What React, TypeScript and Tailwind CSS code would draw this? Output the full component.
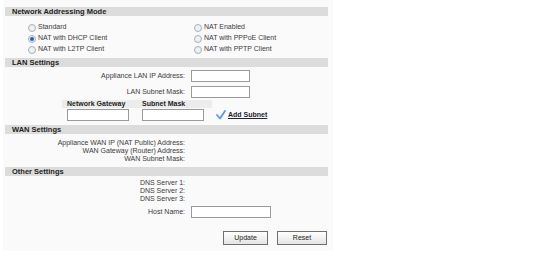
import type { ReactNode } from "react";

const font = { fontFamily: '"Liberation Sans", Arial, sans-serif' };

function Radio({ checked = false, label }: { checked?: boolean; label: string }) {
  return (
    <div className="flex items-center gap-[2px] h-[11px]">
      <span className="w-[8px] h-[8px] rounded-full border border-[#a9b0b8] bg-[#eef0f2] flex items-center justify-center">
        {checked && <span className="w-[4px] h-[4px] rounded-full bg-[#1f5fb8]" />}
      </span>
      <span>{label}</span>
    </div>
  );
}

function Header({ children }: { children: ReactNode }) {
  return (
    <div className="h-[9px] bg-[#dcdcdc] ml-[2px] mr-[5px] pl-[7px] flex items-center font-bold text-[7.5px] text-[#222]">
      {children}
    </div>
  );
}

function Field({ label, input = false }: { label: string; input?: boolean }) {
  return (
    <div className="flex items-center" style={{ height: input ? 16 : 8 }}>
      <div className="w-[188px] text-right pr-[6px]">{label}</div>
      {input && <div className="w-[59px] h-[12px] border border-[#9a9a9a] bg-white" />}
    </div>
  );
}

export default function App() {
  return (
    <div className="w-[551px] h-[266px] bg-white text-[7px] text-[#3a3a3a]" style={font}>
      <div className="ml-[3px] w-[330px] h-[251px] bg-[#fafafa] pt-[7px]">
        <Header>Network Addressing Mode</Header>
        <div className="grid grid-cols-[166px_1fr] pl-[25px] pt-[6px] pb-[3px]">
          <Radio label="Standard" />
          <Radio label="NAT Enabled" />
          <Radio checked label="NAT with DHCP Client" />
          <Radio label="NAT with PPPoE Client" />
          <Radio label="NAT with L2TP Client" />
          <Radio label="NAT with PPTP Client" />
        </div>

        <Header>LAN Settings</Header>
        <div className="pt-[1px]">
          <Field label="Appliance LAN IP Address:" input />
          <Field label="LAN Subnet Mask:" input />
          <div className="ml-[59px] w-[150px] h-[8px] bg-[#ececec] flex items-center font-bold text-[#222]">
            <span className="w-[80px] pl-[5px]">Network Gateway</span>
            <span>Subnet Mask</span>
          </div>
          <div className="flex items-center h-[12px] ml-[64px] mt-[1px]">
            <div className="w-[62px] h-[12px] border border-[#9a9a9a] bg-white" />
            <div className="w-[62px] h-[12px] border border-[#9a9a9a] bg-white ml-[13px]" />
            <svg className="ml-[12px]" width="10" height="10" viewBox="0 0 10 10">
              <path d="M1 5 L4 8.5 L9 1" fill="none" stroke="#5a9be0" strokeWidth="1.8" strokeLinecap="round" strokeLinejoin="round" />
            </svg>
            <span className="ml-[2px] font-bold underline text-[#223]">Add Subnet</span>
          </div>
        </div>

        <div className="mt-[4px]">
          <Header>WAN Settings</Header>
        </div>
        <div className="pt-[5px] pb-[4px] leading-[8px]">
          <Field label="Appliance WAN IP (NAT Public) Address:" />
          <Field label="WAN Gateway (Router) Address:" />
          <Field label="WAN Subnet Mask:" />
        </div>

        <Header>Other Settings</Header>
        <div className="pt-[3px] leading-[8px]">
          <Field label="DNS Server 1:" />
          <Field label="DNS Server 2:" />
          <Field label="DNS Server 3:" />
          <div className="flex items-center h-[18px]">
            <div className="w-[188px] text-right pr-[6px]">Host Name:</div>
            <div className="w-[80px] h-[12px] border border-[#9a9a9a] bg-white" />
          </div>
        </div>

        <div className="flex justify-end gap-[9px] pr-[6px] mt-[10px]">
          <button className="w-[45px] h-[14px] border border-[#6f6f6f] bg-gradient-to-b from-white to-[#e4e4e4] text-[7px] text-[#222]">
            Update
          </button>
          <button className="w-[50px] h-[14px] border border-[#6f6f6f] bg-gradient-to-b from-white to-[#e4e4e4] text-[7px] text-[#222]">
            Reset
          </button>
        </div>
      </div>
    </div>
  );
}
